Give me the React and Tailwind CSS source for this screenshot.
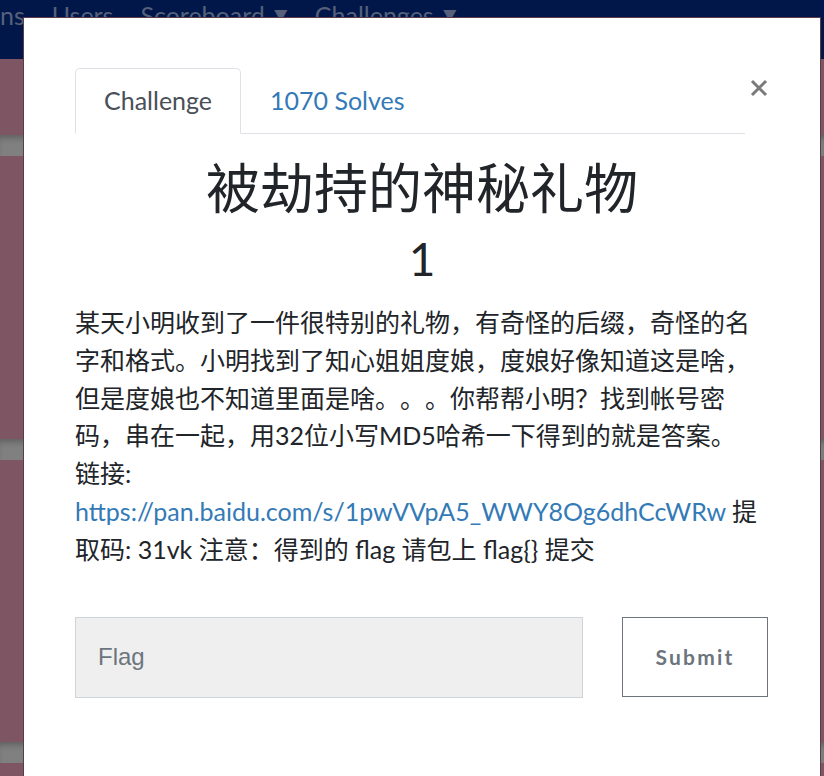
import React from 'react'

function GreyBand() {
  return (
    <div className="h-[21px] bg-[#808080] shadow-[inset_0_6px_6px_-3px_rgba(0,0,0,0.25)]" />
  )
}

export default function App() {
  const bodyFont = { fontFamily: 'Lato, "Noto Sans CJK SC", sans-serif' }

  return (
    <div className="relative w-[824px] h-[776px] overflow-hidden bg-[#7d5563]" style={bodyFont}>
      {/* page behind the overlay */}
      <div className="h-[59px] bg-[#01174a] flex items-start gap-[27px] text-[25px] leading-[30px] text-[#56607a]">
        <span>ns</span>
        <span>Users</span>
        <span className="flex items-center">Scoreboard<span className="ml-[9px] text-[14px]">▼</span></span>
        <span className="flex items-center">Challenges<span className="ml-[9px] text-[14px]">▼</span></span>
      </div>
      <div className="h-[76px]" />
      <GreyBand />
      <div className="h-[283px]" />
      <GreyBand />
      <div className="h-[282px]" />
      <GreyBand />

      {/* modal */}
      <div className="absolute left-[23px] top-[17px] w-[798px] h-[780px] bg-white border border-[#5e3b49] px-[51px] pt-[50px] text-[#212529]">
        <div className="flex items-start">
          <div className="flex-1 flex border-b border-[#dee2e6] h-[66px] mr-[4px]">
            <div className="h-[66px] -mb-px px-[28px] flex items-center bg-white border border-[#dee2e6] border-b-white rounded-t-[5px] text-[25px] text-[#495057]">
              Challenge
            </div>
            <div className="h-[66px] px-[29px] flex items-center text-[25px] text-[#337ab7]">
              1070 Solves
            </div>
          </div>
          <button className="mt-[6px] w-[20px] h-[28px] flex items-center justify-center">
            <svg width="18" height="18" viewBox="0 0 18 18">
              <path d="M2 2 L16 16 M16 2 L2 16" stroke="#7a7a7a" strokeWidth="3" />
            </svg>
          </button>
        </div>

        <h2 className="mt-[22px] text-center text-[54px] leading-[66px] font-normal">被劫持的神秘礼物</h2>
        <h4 className="mt-[9px] text-center text-[46px] leading-[56px] font-normal">1</h4>

        <div className="mt-[17px] text-[25px] leading-[37.8px] [text-spacing-trim:space-all]">
          <p>
            某天小明收到了一件很特别的礼物，有奇怪的后缀，奇怪的名字和格式。小明找到了知心姐姐度娘，度娘好像知道这是啥，但是度娘也不知道里面是啥。。。你帮帮小明？找到帐号密码，串在一起，用32位小写MD5哈希一下得到的就是答案。
            <br />
            链接:{' '}
            <a className="text-[#337ab7]" href="#">https://pan.baidu.com/s/1pwVVpA5_WWY8Og6dhCcWRw</a>
            {' '}提取码: 31vk 注意：得到的 flag 请包上 flag{'{}'} 提交
          </p>
        </div>

        <div className="mt-[48px] flex items-start gap-[39px]">
          <div className="w-[508px] h-[81px] bg-[#efefef] border border-[#cfd4da] flex items-center pl-[22px]">
            <span className="text-[24px] text-[#6c757d]" style={{ fontFamily: '"Liberation Sans", Arial, sans-serif' }}>Flag</span>
          </div>
          <button className="w-[146px] h-[80px] border border-[#6c757d] flex items-center justify-center text-[21px] font-bold tracking-[2.2px] text-[#6c757d]">
            Submit
          </button>
        </div>
      </div>
    </div>
  )
}
